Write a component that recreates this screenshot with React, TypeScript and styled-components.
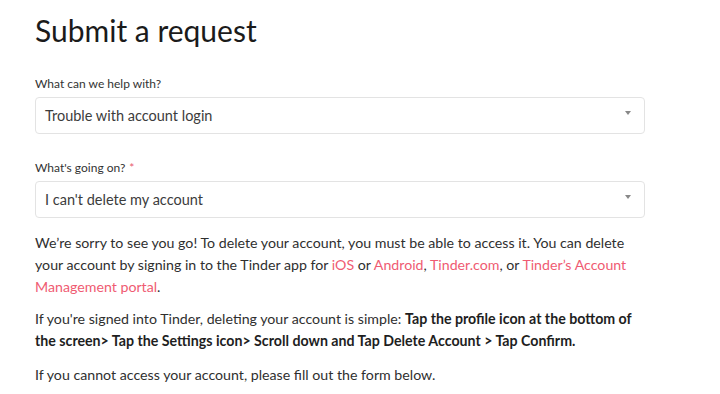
import React from 'react';
import styled, { createGlobalStyle } from 'styled-components';

const GlobalStyle = createGlobalStyle`
  body {
    margin: 0;
    background: #fff;
    font-family: Lato, "Open Sans", Arial, sans-serif;
    color: #2f2f2f;
  }
`;

const Page = styled.div`
  width: 610px;
  padding: 10px 0 0 35px;
`;

const Title = styled.h1`
  font-size: 30px;
  font-weight: 400;
  color: #1b1b1b;
  margin: 0 0 26px;
  line-height: 40px;
`;

const Field = styled.div<{ gap?: number }>`
  margin-bottom: ${(p) => p.gap ?? 26}px;
`;

const Label = styled.label`
  display: block;
  font-size: 12px;
  color: #333;
  margin-bottom: 6px;
  line-height: 15px;
`;

const Required = styled.span`
  color: #e85a70;
  margin-left: 4px;
`;

const SelectBox = styled.div`
  display: flex;
  align-items: center;
  justify-content: space-between;
  height: 37px;
  box-sizing: border-box;
  border: 1px solid #e3e3e3;
  border-radius: 4px;
  padding: 0 13px 0 9px;
  font-size: 14.5px;
  color: #3c3c3c;
`;

const Caret = styled.span`
  width: 0;
  height: 0;
  border-left: 3px solid transparent;
  border-right: 3px solid transparent;
  border-top: 4px solid #888;
  margin-top: -6px;
`;

const Paragraph = styled.p<{ gap?: number }>`
  margin: 0 0 ${(p) => p.gap ?? 12}px;
  font-size: 14.2px;
  line-height: 22px;
  color: #2f2f2f;
`;

const Link = styled.a`
  color: #ef5b72;
  text-decoration: none;
`;

const Strong = styled.strong`
  font-weight: 700;
  color: #1e1e1e;
`;

const Select: React.FC<{ value: string }> = ({ value }) => (
  <SelectBox>
    <span>{value}</span>
    <Caret />
  </SelectBox>
);

export default function App() {
  return (
    <>
      <GlobalStyle />
      <Page>
        <Title>Submit a request</Title>
        <Field>
          <Label>What can we help with?</Label>
          <Select value="Trouble with account login" />
        </Field>
        <Field gap={14}>
          <Label>
            What's going on?<Required>*</Required>
          </Label>
          <Select value="I can't delete my account" />
        </Field>
        <Paragraph gap={10}>
          We’re sorry to see you go! To delete your account, you must be able to access it. You can
          delete your account by signing in to the Tinder app for <Link href="#">iOS</Link> or{' '}
          <Link href="#">Android</Link>, <Link href="#">Tinder.com</Link>, or{' '}
          <Link href="#">Tinder’s Account Management portal</Link>.
        </Paragraph>
        <Paragraph>
          If you're signed into Tinder, deleting your account is simple:{' '}
          <Strong>
            Tap the profile icon at the bottom of the screen&gt; Tap the Settings icon&gt; Scroll
            down and Tap Delete Account &gt; Tap Confirm.
          </Strong>
        </Paragraph>
        <Paragraph>If you cannot access your account, please fill out the form below.</Paragraph>
      </Page>
    </>
  );
}
